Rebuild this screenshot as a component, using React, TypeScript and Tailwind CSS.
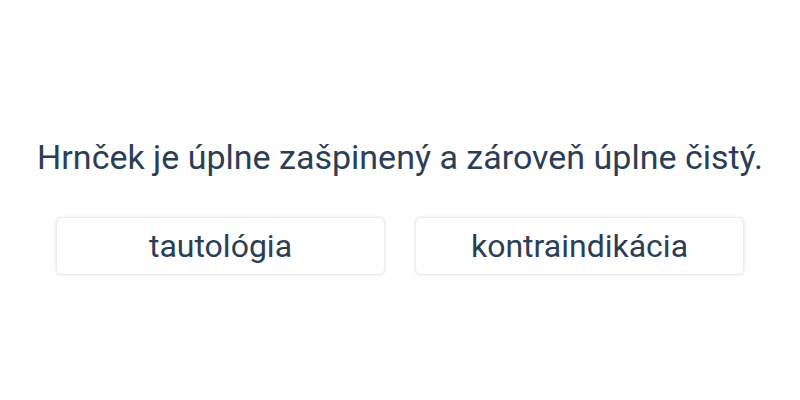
export default function App() {
  return (
    <div className="w-[800px] h-[400px] bg-white flex flex-col items-center pt-[136px] text-[#2c3e55]" style={{ fontFamily: "Roboto, sans-serif" }}>
      <div className="text-[34px] leading-[42px]">Hrnček je úplne zašpinený a zároveň úplne čistý.</div>
      <div className="mt-[39px] flex gap-[30px]">
        <button className="w-[329px] h-[58px] rounded-[6px] border border-[#ececec] bg-white shadow-[0_0_3px_rgba(0,0,0,0.12)] text-[32px] text-[#2c3e55]">tautológia</button>
        <button className="w-[329px] h-[58px] rounded-[6px] border border-[#ececec] bg-white shadow-[0_0_3px_rgba(0,0,0,0.12)] text-[32px] text-[#2c3e55]">kontraindikácia</button>
      </div>
    </div>
  );
}
